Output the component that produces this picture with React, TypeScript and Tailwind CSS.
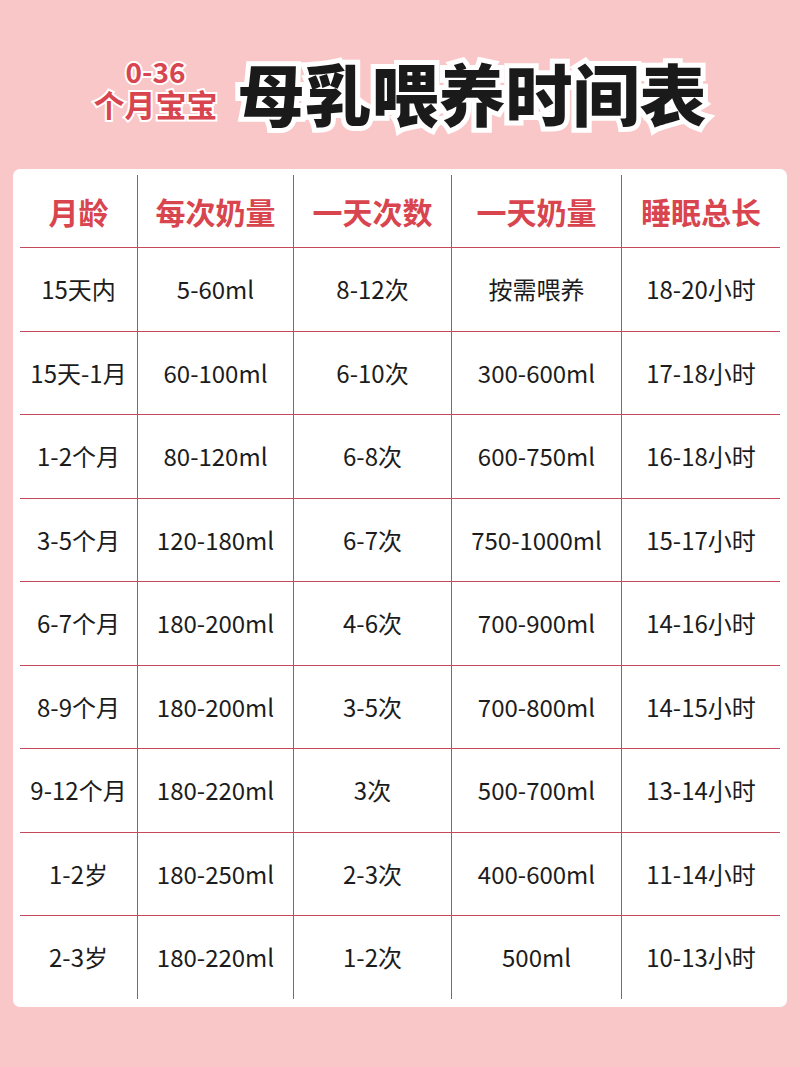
const headers = ['月龄', '每次奶量', '一天次数', '一天奶量', '睡眠总长'];

const rows: string[][] = [
  ['15天内', '5-60ml', '8-12次', '按需喂养', '18-20小时'],
  ['15天-1月', '60-100ml', '6-10次', '300-600ml', '17-18小时'],
  ['1-2个月', '80-120ml', '6-8次', '600-750ml', '16-18小时'],
  ['3-5个月', '120-180ml', '6-7次', '750-1000ml', '15-17小时'],
  ['6-7个月', '180-200ml', '4-6次', '700-900ml', '14-16小时'],
  ['8-9个月', '180-200ml', '3-5次', '700-800ml', '14-15小时'],
  ['9-12个月', '180-220ml', '3次', '500-700ml', '13-14小时'],
  ['1-2岁', '180-250ml', '2-3次', '400-600ml', '11-14小时'],
  ['2-3岁', '180-220ml', '1-2次', '500ml', '10-13小时'],
];

export default function App() {
  return (
    <div className="min-h-[1067px] w-[800px] bg-[#fac7c8] px-[13px] font-['Noto_Sans_CJK_SC','Noto_Sans',sans-serif]">
      {/* title */}
      <div className="flex h-[169px] items-center justify-center gap-[20px] pt-[14px]">
        <div className="-mt-[8px] flex flex-col items-center gap-[3px] font-bold text-[#d9454f] [-webkit-text-stroke:4px_white] [paint-order:stroke_fill]">
          <span className="text-[28px] leading-[28px]">0-36</span>
          <span className="text-[31px] leading-[31px]">个月宝宝</span>
        </div>
        <h1 className="text-[67px] font-black leading-none text-[#1a1a1a] [-webkit-text-stroke:10px_white] [paint-order:stroke_fill]">
          母乳喂养时间表
        </h1>
      </div>

      {/* table card */}
      <div className="rounded-[7px] bg-white pb-[8px] pl-[7px] pr-[6px] pt-[6px]">
        <div className="grid grid-cols-[117px_156px_158px_170px_159px]">
          {headers.map((h, i) => (
            <div
              key={h}
              className={`flex h-[72px] items-center justify-center text-[30px] font-bold text-[#d9454f] ${i > 0 ? 'border-l border-[#c24a5a]' : ''}`}
            >
              {h}
            </div>
          ))}
          {rows.map((r) =>
            r.map((c, i) => (
              <div
                key={r[0] + i}
                className={`flex h-[83.5px] items-center justify-center border-t border-[#c24a5a] text-[24px] text-[#1c1c1c] ${i > 0 ? 'border-l' : ''}`}
              >
                {c}
              </div>
            ))
          )}
        </div>
      </div>
    </div>
  );
}
